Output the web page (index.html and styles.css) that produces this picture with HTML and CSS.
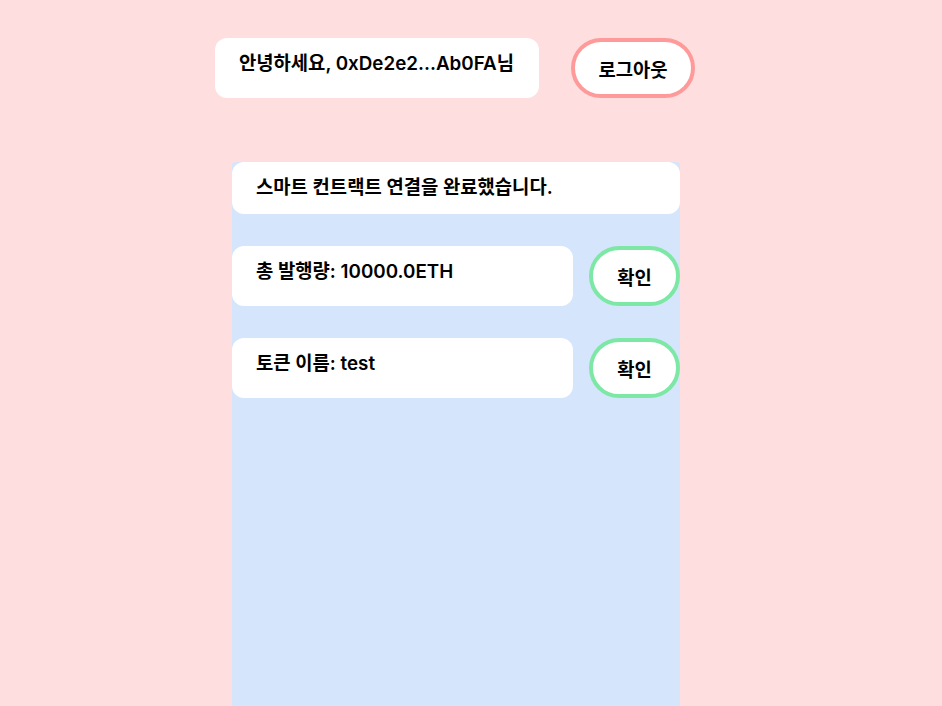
FILE: index.html
```html
<!DOCTYPE html>
<html lang="ko">
<head>
<meta charset="utf-8">
<link rel="stylesheet" href="styles.css">
</head>
<body>
<div class="page">
  <header class="header">
    <div class="greeting">안녕하세요, 0xDe2e2...Ab0FA님</div>
    <button class="btn btn-logout">로그아웃</button>
  </header>
  <main class="panel">
    <div class="card card-full">스마트 컨트랙트 연결을 완료했습니다.</div>
    <div class="row">
      <div class="card card-row">총 발행량: 10000.0ETH</div>
      <button class="btn btn-check">확인</button>
    </div>
    <div class="row">
      <div class="card card-row">토큰 이름: test</div>
      <button class="btn btn-check">확인</button>
    </div>
  </main>
</div>
</body>
</html>
```
FILE: styles.css
```css
html, body {
  margin: 0;
  padding: 0;
  background: #ffdedf;
  height: 100%;
  overflow: hidden;
}
body {
  font-family: Inter, "Noto Sans CJK KR", sans-serif;
  font-weight: 600;
  color: #000;
}
.page {
  padding: 38px 0 0 215px;
}
.header {
  display: flex;
  gap: 32px;
  align-items: stretch;
}
.greeting {
  box-sizing: border-box;
  width: 324px;
  height: 60px;
  background: #fff;
  border-radius: 12px;
  padding: 12px 24px 0;
  font-size: 18.8px;
  line-height: 28px;
  white-space: nowrap;
}
.btn {
  box-sizing: border-box;
  height: 60px;
  background: #fff;
  border-radius: 30px;
  font-family: inherit;
  font-weight: 600;
  font-size: 18.8px;
  color: #000;
  padding: 0;
  cursor: pointer;
}
.btn-logout {
  width: 124px;
  border: 4px solid #fe9a9a;
}
.panel {
  margin: 64px 0 0 17px;
  width: 448px;
  height: 544px;
  background: #d5e5fb;
  border-radius: 4px 4px 0 0;
  display: flex;
  flex-direction: column;
  gap: 32px;
}
.card {
  box-sizing: border-box;
  background: #fff;
  border-radius: 12px;
  font-size: 18.8px;
  line-height: 28px;
  padding: 12px 24px 0;
  white-space: nowrap;
}
.card-full {
  height: 52px;
}
.row {
  display: flex;
  gap: 16px;
}
.card-row {
  width: 341px;
  height: 60px;
}
.btn-check {
  width: 91px;
  border: 4px solid #7de8a5;
}
```
